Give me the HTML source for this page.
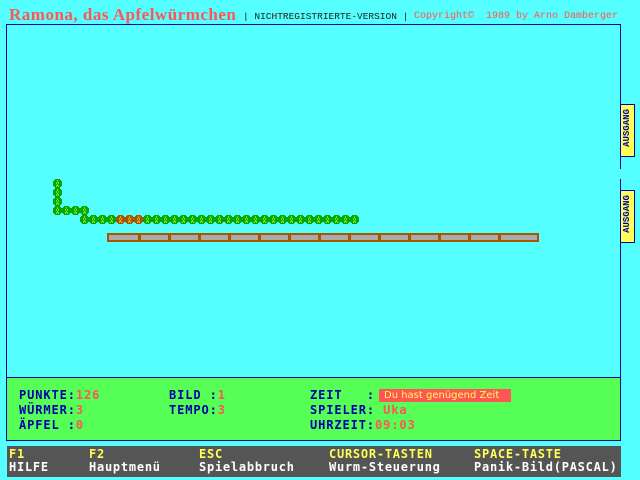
<!DOCTYPE html>
<html><head><meta charset="utf-8"><style>
body{margin:0;width:640px;height:480px;background:#55ffff;position:relative;overflow:hidden;font-family:"Liberation Mono","DejaVu Sans Mono",monospace}
.a{position:absolute;white-space:pre}
.b{font-weight:bold;font-size:12px;color:#0000aa;font-family:"DejaVu Sans Mono","Liberation Mono",monospace;letter-spacing:0.9px}
.r{color:#ff5555}
.y{color:#ffff55}
.w{color:#fff}
.f{font-weight:bold;font-size:12px;font-family:"DejaVu Sans Mono","Liberation Mono",monospace;letter-spacing:0.75px}
</style></head><body>
<div class="a" style="left:9px;top:5px;font-family:'Liberation Serif',serif;font-weight:bold;font-size:17px;color:#ff5555;letter-spacing:0.5px">Ramona, das Apfelwürmchen</div>
<div class="a" style="left:243px;top:11px;font-size:9.5px;color:#222">| NICHTREGISTRIERTE-VERSION |</div>
<div class="a" style="left:414px;top:11px;font-size:10px;color:#ff5555">Copyright©  1989 by Arno Damberger</div>
<div class="a" style="left:6px;top:24px;width:613px;height:352px;border:1px solid #0000aa;border-right:none"></div>
<div class="a" style="left:620px;top:24px;width:1px;height:145px;background:#0000aa"></div>
<div class="a" style="left:620px;top:179px;width:1px;height:198px;background:#0000aa"></div>
<div class="a" style="left:620px;top:104px;width:13px;height:51px;background:#ffff55;border:1px solid #0000aa"></div>
<div class="a" style="left:620px;top:190px;width:13px;height:51px;background:#ffff55;border:1px solid #0000aa"></div>
<div class="a" style="left:621px;top:152px;transform:rotate(-90deg);transform-origin:0 0;font-size:9px;color:#0000aa;font-weight:bold;width:48px;text-align:center;line-height:13px">AUSGANG</div>
<div class="a" style="left:621px;top:238px;transform:rotate(-90deg);transform-origin:0 0;font-size:9px;color:#0000aa;font-weight:bold;width:48px;text-align:center;line-height:13px">AUSGANG</div>
<svg class="a" style="left:0;top:0" width="640" height="480">
<defs>
<g id="s"><rect x="-4.5" y="-2.5" width="9" height="5"/><rect x="-2.5" y="-4.5" width="5" height="9"/><rect x="-3.5" y="-3.5" width="7" height="7"/></g>
<g id="c" fill="#ffff55"><rect x="-0.5" y="-3" width="1" height="1"/><rect x="-1.5" y="-1" width="1" height="1"/><rect x="0.5" y="-1" width="1" height="1"/><rect x="-0.5" y="1" width="1" height="1"/><rect x="-1.5" y="2" width="1" height="1"/><rect x="0.5" y="2" width="1" height="1"/></g>
</defs>
<g fill="#00aa00">
<rect x="56" y="183" width="3" height="27"/>
<rect x="57" y="209" width="27" height="3"/>
<rect x="83" y="210" width="3" height="9"/>
<rect x="84" y="218" width="270" height="3"/>
<use href="#s" x="57.5" y="183.5"/><use href="#s" x="57.5" y="192.5"/><use href="#s" x="57.5" y="201.5"/><use href="#s" x="57.5" y="210.5"/>
<use href="#s" x="66.5" y="210.5"/><use href="#s" x="75.5" y="210.5"/><use href="#s" x="84.5" y="210.5"/>
<use href="#s" x="84.5" y="219.5"/><use href="#s" x="93.5" y="219.5"/><use href="#s" x="102.5" y="219.5"/><use href="#s" x="111.5" y="219.5"/>
<g fill="#aa5500"><rect x="117" y="218" width="26" height="3"/><use href="#s" x="120.5" y="219.5"/><use href="#s" x="129.5" y="219.5"/><use href="#s" x="138.5" y="219.5"/></g>
<use href="#s" x="147.5" y="219.5"/><use href="#s" x="156.5" y="219.5"/><use href="#s" x="165.5" y="219.5"/><use href="#s" x="174.5" y="219.5"/><use href="#s" x="183.5" y="219.5"/><use href="#s" x="192.5" y="219.5"/><use href="#s" x="201.5" y="219.5"/><use href="#s" x="210.5" y="219.5"/><use href="#s" x="219.5" y="219.5"/><use href="#s" x="228.5" y="219.5"/><use href="#s" x="237.5" y="219.5"/><use href="#s" x="246.5" y="219.5"/><use href="#s" x="255.5" y="219.5"/><use href="#s" x="264.5" y="219.5"/><use href="#s" x="273.5" y="219.5"/><use href="#s" x="282.5" y="219.5"/><use href="#s" x="291.5" y="219.5"/><use href="#s" x="300.5" y="219.5"/><use href="#s" x="309.5" y="219.5"/><use href="#s" x="318.5" y="219.5"/><use href="#s" x="327.5" y="219.5"/><use href="#s" x="336.5" y="219.5"/><use href="#s" x="345.5" y="219.5"/><use href="#s" x="354.5" y="219.5"/>
</g>
<g>
<use href="#c" x="57.5" y="183.5"/><use href="#c" x="57.5" y="192.5"/><use href="#c" x="57.5" y="201.5"/><use href="#c" x="57.5" y="210.5"/><use href="#c" x="66.5" y="210.5"/><use href="#c" x="75.5" y="210.5"/><use href="#c" x="84.5" y="210.5"/>
<use href="#c" x="84.5" y="219.5"/><use href="#c" x="93.5" y="219.5"/><use href="#c" x="102.5" y="219.5"/><use href="#c" x="111.5" y="219.5"/><use href="#c" x="120.5" y="219.5"/><use href="#c" x="129.5" y="219.5"/><use href="#c" x="138.5" y="219.5"/><use href="#c" x="147.5" y="219.5"/><use href="#c" x="156.5" y="219.5"/><use href="#c" x="165.5" y="219.5"/><use href="#c" x="174.5" y="219.5"/><use href="#c" x="183.5" y="219.5"/><use href="#c" x="192.5" y="219.5"/><use href="#c" x="201.5" y="219.5"/><use href="#c" x="210.5" y="219.5"/><use href="#c" x="219.5" y="219.5"/><use href="#c" x="228.5" y="219.5"/><use href="#c" x="237.5" y="219.5"/><use href="#c" x="246.5" y="219.5"/><use href="#c" x="255.5" y="219.5"/><use href="#c" x="264.5" y="219.5"/><use href="#c" x="273.5" y="219.5"/><use href="#c" x="282.5" y="219.5"/><use href="#c" x="291.5" y="219.5"/><use href="#c" x="300.5" y="219.5"/><use href="#c" x="309.5" y="219.5"/><use href="#c" x="318.5" y="219.5"/><use href="#c" x="327.5" y="219.5"/><use href="#c" x="336.5" y="219.5"/><use href="#c" x="345.5" y="219.5"/><use href="#c" x="354.5" y="219.5"/>
</g>
<rect x="107" y="233" width="432" height="9" fill="#aa5500"/>
<g fill="#aaaaaa">
<rect x="109" y="235" width="29" height="5"/><rect x="141" y="235" width="27" height="5"/><rect x="171" y="235" width="27" height="5"/><rect x="201" y="235" width="27" height="5"/><rect x="231" y="235" width="27" height="5"/><rect x="261" y="235" width="27" height="5"/><rect x="291" y="235" width="27" height="5"/><rect x="321" y="235" width="27" height="5"/><rect x="351" y="235" width="27" height="5"/><rect x="381" y="235" width="27" height="5"/><rect x="411" y="235" width="27" height="5"/><rect x="441" y="235" width="27" height="5"/><rect x="471" y="235" width="27" height="5"/><rect x="501" y="235" width="36" height="5"/>
</g>
</svg>
<div class="a" style="left:6px;top:377px;width:613px;height:62px;background:#55ff55;border:1px solid #0000aa"></div>
<div class="a b" style="left:19px;top:388px">PUNKTE:<span class="r">126</span></div>
<div class="a b" style="left:19px;top:403px">WÜRMER:<span class="r">3</span></div>
<div class="a b" style="left:19px;top:418px">ÄPFEL :<span class="r">0</span></div>
<div class="a b" style="left:169px;top:388px">BILD :<span class="r">1</span></div>
<div class="a b" style="left:169px;top:403px">TEMPO:<span class="r">3</span></div>
<div class="a b" style="left:310px;top:388px">ZEIT   :</div>
<div class="a" style="left:379px;top:389px;width:132px;height:13px;background:#ff5555;color:#ffff55;font-size:10px;line-height:13px;padding-left:5px;box-sizing:border-box;font-family:'DejaVu Sans',sans-serif">Du hast genügend Zeit</div>
<div class="a b" style="left:310px;top:403px">SPIELER: <span class="r">Uka</span></div>
<div class="a b" style="left:310px;top:418px">UHRZEIT:<span class="r">09:03</span></div>
<div class="a" style="left:7px;top:446px;width:614px;height:31px;background:#555555"></div>
<div class="a f y" style="left:9px;top:447px">F1</div><div class="a f w" style="left:9px;top:460px">HILFE</div>
<div class="a f y" style="left:89px;top:447px">F2</div><div class="a f w" style="left:89px;top:460px">Hauptmenü</div>
<div class="a f y" style="left:199px;top:447px">ESC</div><div class="a f w" style="left:199px;top:460px">Spielabbruch</div>
<div class="a f y" style="left:329px;top:447px">CURSOR-TASTEN</div><div class="a f w" style="left:329px;top:460px">Wurm-Steuerung</div>
<div class="a f y" style="left:474px;top:447px">SPACE-TASTE</div><div class="a f w" style="left:474px;top:460px">Panik-Bild(PASCAL)</div>
</body></html>
